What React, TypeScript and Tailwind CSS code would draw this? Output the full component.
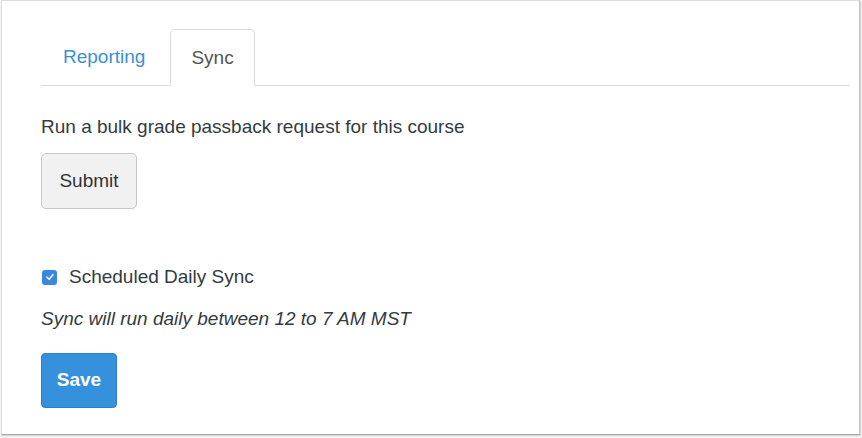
import { useState } from 'react'

const FONT = { fontFamily: '"Liberation Sans", Arial, sans-serif' }

export default function App() {
  const [tab, setTab] = useState('sync')
  const [daily, setDaily] = useState(true)

  return (
    <div className="w-[862px] h-[438px] bg-[#f4f4f4]" style={FONT}>
      <div className="ml-[1px] w-[859px] h-[435px] bg-white border border-[#dcdcdc] border-b-[#a8a8a8] border-r-[#c4c4c4] shadow-[1px_1px_1px_rgba(0,0,0,0.12)]">
        <div className="pl-[39px] pr-[9px] pt-[28px]">
          <nav className="flex border-b border-[#dddddd] text-[19px] leading-[24px]">
            <button
              onClick={() => setTab('reporting')}
              className={
                tab === 'reporting'
                  ? 'pl-[21px] pr-[23px] py-[15px] mr-[1px] -mb-[1px] border border-[#dddddd] border-b-white rounded-t-[5px] bg-white text-[#555555]'
                  : 'pl-[21px] pr-[23px] py-[15px] mr-[1px] border border-transparent text-[#3d8fd4]'
              }
            >
              Reporting
            </button>
            <button
              onClick={() => setTab('sync')}
              className={
                tab === 'sync'
                  ? 'px-[20px] py-[15px] -mb-[1px] border border-[#dddddd] border-b-white rounded-t-[5px] bg-white text-[#555555]'
                  : 'px-[20px] py-[15px] border border-transparent text-[#3d8fd4]'
              }
            >
              Sync
            </button>
          </nav>

          <div className="pt-[29px] text-[#333b42]">
            <p className="text-[19px] leading-[24px]">Run a bulk grade passback request for this course</p>
            <button className="mt-[14px] w-[96px] h-[56px] rounded-[5px] border border-[#c9c9c9] bg-[#f1f1f1] text-[19px] text-[#333333]">
              Submit
            </button>

            <label className="mt-[56px] flex items-center gap-[12px] text-[19px] leading-[24px] text-[#333b42]">
              <span
                onClick={() => setDaily(!daily)}
                className={
                  daily
                    ? 'w-[15px] h-[15px] ml-[1px] rounded-[3px] bg-[#3a87e0] flex items-center justify-center'
                    : 'w-[15px] h-[15px] ml-[1px] rounded-[3px] border border-[#aaa] bg-white'
                }
              >
                {daily && (
                  <svg width="10" height="10" viewBox="0 0 10 10" fill="none">
                    <path d="M2 5.2 L4.1 7.3 L8 2.8" stroke="white" strokeWidth="1.6" strokeLinecap="round" strokeLinejoin="round" />
                  </svg>
                )}
              </span>
              Scheduled Daily Sync
            </label>

            <p className="mt-[18px] text-[19px] leading-[24px] italic">Sync will run daily between 12 to 7 AM MST</p>

            <button className="mt-[22px] w-[76px] h-[55px] rounded-[4px] border border-[#2c7fc9] bg-[#3591dc] text-[19px] font-bold text-white">
              Save
            </button>
          </div>
        </div>
      </div>
    </div>
  )
}
